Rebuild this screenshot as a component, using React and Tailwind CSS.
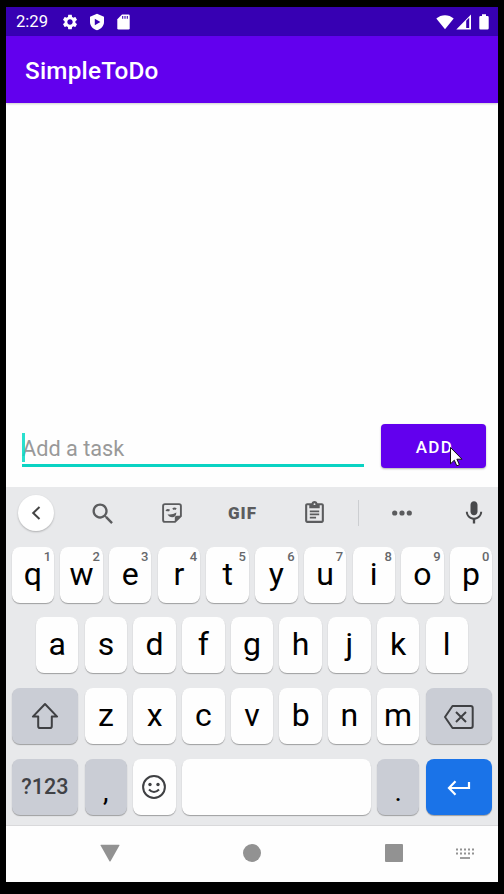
import React from "react";

function Svg({ w, h, className = "", children }) {
  return (
    <svg width={w} height={h} viewBox={`0 0 ${w} ${h}`} fill="none" className={`block shrink-0 ${className}`}>
      {children}
    </svg>
  );
}

function MaterialIcon({ size, d, className = "" }) {
  return (
    <svg width={size} height={size} viewBox="0 0 24 24" fill="currentColor" className={`block shrink-0 ${className}`}>
      <path fillRule="evenodd" d={d} />
    </svg>
  );
}

const GEAR =
  "M19.14 12.94c.04-.3.06-.61.06-.94 0-.32-.02-.64-.07-.94l2.03-1.58c.18-.14.23-.41.12-.61l-1.92-3.32c-.12-.22-.37-.29-.59-.22l-2.39.96c-.5-.38-1.03-.7-1.62-.94l-.36-2.54c-.04-.24-.24-.41-.48-.41h-3.84c-.24 0-.43.17-.47.41l-.36 2.54c-.59.24-1.13.57-1.62.94l-2.39-.96c-.22-.08-.47 0-.59.22L2.74 8.87c-.12.21-.08.47.12.61l2.03 1.58c-.05.3-.09.63-.09.94s.02.64.07.94l-2.03 1.58c-.18.14-.23.41-.12.61l1.92 3.32c.12.22.37.29.59.22l2.39-.96c.5.38 1.03.7 1.62.94l.36 2.54c.05.24.24.41.48.41h3.84c.24 0 .44-.17.47-.41l.36-2.54c.59-.24 1.13-.56 1.62-.94l2.39.96c.22.08.47 0 .59-.22l1.92-3.32c.12-.22.07-.47-.12-.61l-2.01-1.58zM12 15.6c-1.98 0-3.6-1.62-3.6-3.6s1.62-3.6 3.6-3.6 3.6 1.62 3.6 3.6-1.62 3.6-3.6 3.6z";
const SEARCH =
  "M15.5 14h-.79l-.28-.27C15.41 12.59 16 11.11 16 9.5 16 5.91 13.09 3 9.5 3S3 5.91 3 9.5 5.91 16 9.5 16c1.61 0 3.09-.59 4.23-1.57l.27.28v.79l5 4.99L20.49 19l-4.99-5zm-6 0C7.01 14 5 11.99 5 9.5S7.01 5 9.5 5 14 7.01 14 9.5 11.99 14 9.5 14z";
const CLIPBOARD =
  "M19 3h-4.18C14.4 1.84 13.3 1 12 1s-2.4.84-2.82 2H5c-1.1 0-2 .9-2 2v15c0 1.1.9 2 2 2h14c1.1 0 2-.9 2-2V5c0-1.100-.9-2-2-2zM12 3.100a.9.9 0 1 1 0 1.800a.9.9 0 0 1 0-1.800zM5 5h2v3h10V5h2v15H5zM7.500 10h9v1.700h-9zM7.500 13h9v1.700h-9zM7.500 16h6v1.700h-6z";
const MIC =
  "M12 14c1.660 0 3-1.340 3-3V5c0-1.660-1.340-3-3-3S9 3.340 9 5v6c0 1.660 1.340 3 3 3zm5.300-3c0 3-2.540 5.100-5.300 5.100S6.700 14 6.700 11H5c0 3.410 2.720 6.230 6 6.720V21h2v-3.280c3.280-.48 6-3.300 6-6.720h-1.700z";

function StatusBar() {
  return (
    <header className="flex h-[29px] items-center bg-[#3700b3] pl-[10px] text-white">
      <span className="w-[47px] text-[16.600px] leading-[30px]">2:29</span>
      <MaterialIcon size={18} d={GEAR} className="ml-[-2px]" />
      <Svg w={16} h={18} className="ml-[9.500px]">
        <path fillRule="evenodd" fill="#fff" d="M8 .8 1 3.700V9c0 4 3 7 7 8.200C12 16 15 13 15 9V3.700zM5.800 5.800v6.400L11.400 9z" />
      </Svg>
      <Svg w={13} h={16} className="ml-[12px]">
        <path fill="#fff" d="M5 .5h6.500q1.200 0 1.200 1.200v12.600q0 1.200-1.200 1.200h-10q-1.200 0-1.200-1.200V5.200z" />
        <path stroke="#3700b3" strokeWidth="1.100" d="M5.700 2v2.800M8 2v2.800M10.300 2v2.800" />
      </Svg>
      <div className="ml-auto flex items-center pr-[9px]">
        <Svg w={18} h={16}>
          <path fill="#fff" d="M.3 4.600C5.200.1 12.800.1 17.700 4.600L9 15.200z" />
        </Svg>
        <Svg w={16} h={16} className="ml-[2px]">
          <path fill="#fff" fillRule="evenodd" d="M.3 15.500 15 .5v15zM10.200 6.800v7.200h3V3.800z" />
        </Svg>
        <Svg w={10} h={16} className="ml-[7px]">
          <path fill="#fff" d="M3 .3h4V2h1.500q1.200 0 1.200 1.200v11.100q0 1.200-1.200 1.200h-7q-1.200 0-1.200-1.200V3.200Q.3 2 1.500 2H3z" />
        </Svg>
      </div>
    </header>
  );
}

function TaskEntry() {
  return (
    <div className="flex items-start pl-[16px] pr-[12px]">
      <div className="relative h-[43px] w-[342.400px] border-b-[3px] border-[#0ad3c3] text-[21.700px] leading-[50px] text-[#999]">
        Add a task
        <span className="absolute left-0 top-[9px] h-[29px] w-[3px] bg-[#03dac5]/85" />
      </div>
      <button className="relative ml-[16.600px] h-[44px] w-[105px] rounded-[4px] bg-[#6200ee] pl-[2px] text-[17px] font-medium leading-[47px] tracking-[1.400px] text-white shadow-[0_1px_2px_rgba(0,0,0,0.3)]">
        ADD
        <Svg w={14} h={22} className="absolute left-[68px] top-[22px]">
          <path d="M1.500 1.500v16.300l3.800-3.600 2.500 5.600 2.600-1.100-2.500-5.500H13z" fill="#fff" stroke="#111" strokeWidth="1" />
        </Svg>
      </button>
    </div>
  );
}

function Toolbar() {
  return (
    <div className="flex h-[53px] items-center pb-px pl-[12px] text-[#5b5c5e]">
      <div className="flex h-[36px] w-[36px] items-center justify-center rounded-full bg-white shadow-[0_1px_2px_rgba(0,0,0,0.25)]">
        <Svg w={10} h={14}>
          <path d="M8.500 1 2.200 7l6.300 6" stroke="#444" strokeWidth="2" />
        </Svg>
      </div>
      <MaterialIcon size={28} d={SEARCH} className="ml-[34.500px] mt-[1px]" />
      <Svg w={20} h={20} className="ml-[45.500px]">
        <path d="M3 1.100h14q1.900 0 1.900 1.900v10L13 18.900H3Q1.100 18.900 1.100 17V3Q1.100 1.100 3 1.100z" stroke="currentColor" strokeWidth="1.900" />
        <path d="M12.800 19v-4.200q0-2 2-2H19z" fill="currentColor" />
        <path d="M4.300 8q1.200-1.800 3.200-.4M11 6.300q1.300-1.600 3.100-.2" stroke="currentColor" strokeWidth="2" />
        <path d="M5.500 11.200q4.500.9 8.900-1.800-.4 4.600-4 4.800-3.300.1-4.900-3z" fill="currentColor" />
      </Svg>
      <span className="ml-[46px] mt-[1px] w-[30px] whitespace-nowrap text-[17px] font-black leading-none tracking-[1px]">GIF</span>
      <MaterialIcon size={25} d={CLIPBOARD} className="ml-[44px] mt-[-1px]" />
      <span className="ml-[31px] h-[26px] w-px bg-[#ccced1]" />
      <Svg w={20} h={6} className="ml-[33px]">
        <circle cx="2.700" cy="3" r="2.600" fill="currentColor" />
        <circle cx="10" cy="3" r="2.600" fill="currentColor" />
        <circle cx="17.300" cy="3" r="2.600" fill="currentColor" />
      </Svg>
      <MaterialIcon size={28} d={MIC} className="ml-[48px] text-[#48494b]" />
    </div>
  );
}

const KEY = "relative flex h-[56px] shrink-0 justify-center rounded-[8px] shadow-[0_1px_1px_rgba(0,0,0,0.32)]";

function LetterKey({ label, hint }) {
  return (
    <div className={`${KEY} w-[42.400px] bg-[#fefefe] text-[32px] leading-[54px] text-black`}>
      {label}
      {hint && <span className="absolute right-[3px] top-[2px] text-[13px] font-medium leading-[15px] text-[#66686b]">{hint}</span>}
    </div>
  );
}

function WideKey({ className, children }) {
  return <div className={`${KEY} items-center ${className}`}>{children}</div>;
}

function Keyboard() {
  return (
    <section className="h-[338px] bg-[#e8e9eb]">
      <Toolbar />
      <div className="flex flex-col gap-[14.400px] pt-[7px]">
        <div className="flex justify-center gap-[6.300px]">
          {[..."qwertyuiop"].map((c, i) => (
            <LetterKey key={c} label={c} hint={String((i + 1) % 10)} />
          ))}
        </div>
        <div className="flex justify-center gap-[6.300px]">
          {[..."asdfghjkl"].map((c) => (
            <LetterKey key={c} label={c} />
          ))}
        </div>
        <div className="flex justify-center gap-[6.300px]">
          <WideKey className="w-[66.700px] bg-[#cacdd5]">
            <Svg w={28} h={28}>
              <path d="M14 2 1.900 14.600h5.300v9.600q0 1.800 1.800 1.800h10q1.800 0 1.800-1.800v-9.600h5.300z" stroke="#3f4043" strokeWidth="2" strokeLinejoin="round" />
            </Svg>
          </WideKey>
          {[..."zxcvbnm"].map((c) => (
            <LetterKey key={c} label={c} />
          ))}
          <WideKey className="w-[66.700px] bg-[#cacdd5]">
            <Svg w={32} h={26} className="mt-[2px]">
              <path d="M9.500 2h18.200q2 0 2 2v18q0 2-2 2H9.500L2 13z" stroke="#3f4043" strokeWidth="2" strokeLinejoin="round" />
              <path d="m13 8 10 10M23 8 13 18" stroke="#3f4043" strokeWidth="2" />
            </Svg>
          </WideKey>
        </div>
        <div className="mt-[0.400px] flex justify-center gap-[6.300px]">
          <WideKey className="w-[66.700px] bg-[#cacdd5] text-[21.500px] font-medium text-[#404145]">
            <span className="mt-[1px]">?123</span>
          </WideKey>
          <WideKey className="w-[42.400px] bg-[#cacdd5] text-[28px] text-black">
            <span className="mt-[10px] leading-none">,</span>
          </WideKey>
          <WideKey className="w-[42.400px] bg-[#fefefe]">
            <Svg w={26} h={26}>
              <circle cx="13" cy="13" r="10.900" stroke="#3f4043" strokeWidth="2" />
              <circle cx="9" cy="10.500" r="1.700" fill="#3f4043" />
              <circle cx="17" cy="10.500" r="1.700" fill="#3f4043" />
              <path d="M8 15.500q5 5 10 0" stroke="#3f4043" strokeWidth="2" />
            </Svg>
          </WideKey>
          <WideKey className="w-[188.800px] bg-[#fefefe]" />
          <WideKey className="w-[42.400px] bg-[#cacdd5] text-[28px] text-black">
            <span className="mt-[10px] leading-none">.</span>
          </WideKey>
          <WideKey className="w-[66.700px] bg-[#1a73e8]">
            <Svg w={24} h={16} className="mt-[2px]">
              <path d="M22 2v6H2M8.500 1.300 2 8l6.500 6.700" stroke="#fff" strokeWidth="2.200" />
            </Svg>
          </WideKey>
        </div>
      </div>
    </section>
  );
}

function NavigationBar() {
  return (
    <nav className="flex h-[57px] items-center border-t border-[#d9d9db] bg-[#fefefe] pb-[2px] pl-[94px] text-[#929292]">
      <Svg w={20} h={18}>
        <path d="M1 .7h18q.8 0 .4.8L10.700 17q-.7 1-1.400 0L.6 1.500Q.2.700 1 .7z" fill="currentColor" />
      </Svg>
      <span className="ml-[123px] h-[18px] w-[18px] rounded-full bg-current" />
      <span className="ml-[123.500px] h-[18px] w-[18px] rounded-[1px] bg-current" />
      <Svg w={18} h={12} className="ml-[53.500px] mt-[1px]">
        <path d="M0 1.500h18M0 5.500h18" stroke="currentColor" strokeWidth="2" strokeDasharray="2 2" />
        <path d="M4 10h10" stroke="currentColor" strokeWidth="1.800" />
      </Svg>
    </nav>
  );
}

export default function App() {
  return (
    <div className="h-[894px] w-[504px] overflow-hidden bg-black px-[6px] pt-[7px] font-['Roboto',sans-serif]">
      <main className="flex h-[875px] flex-col bg-[#fefefe]">
        <StatusBar />
        <h1 className="relative h-[67px] shrink-0 bg-[#6200ee] pl-[19px] text-[24.300px] font-medium leading-[69px] tracking-[0.200px] text-white shadow-[0_1px_2px_rgba(0,0,0,0.2)]">
          SimpleToDo
        </h1>
        <div className="h-[321px] shrink-0" />
        <div className="h-[63px] shrink-0">
          <TaskEntry />
        </div>
        <Keyboard />
        <NavigationBar />
      </main>
    </div>
  );
}
